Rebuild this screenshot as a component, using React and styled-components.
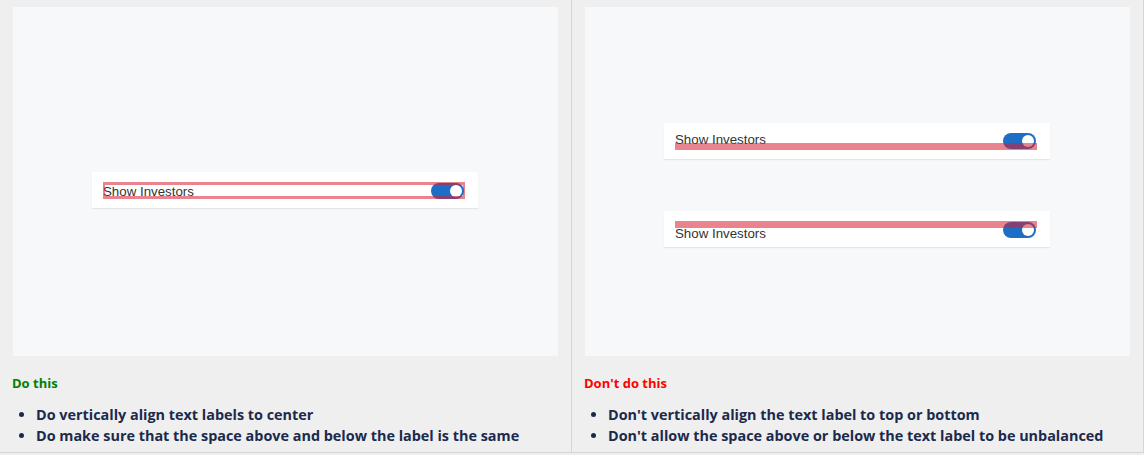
import React from "react";
import styled, { createGlobalStyle } from "styled-components";

const Global = createGlobalStyle`
  html, body { margin: 0; padding: 0; background: #efefef; }
  body { width: 1144px; height: 455px; overflow: hidden; }
`;

const Page = styled.div`
  display: grid;
  grid-template-columns: 571px 571px;
  column-gap: 1px;
  width: 1143px;
  height: 452px;
  background: #d6d6d6;
  border-right: 1px solid #d6d6d6;
  border-bottom: 1px solid #d6d6d6;
`;

const Column = styled.section`
  background: #efefef;
  padding: 7px 13px 0;
  display: flex;
  flex-direction: column;
`;

const Canvas = styled.div`
  height: 349px;
  background: #f7f8fa;
  display: flex;
  flex-direction: column;
  align-items: flex-start;
  padding: ${(p) => p.$top}px 0 0 79px;
  gap: 52px;
  box-sizing: border-box;
`;

const Card = styled.div`
  width: 386px;
  height: 36px;
  box-sizing: border-box;
  background: #ffffff;
  box-shadow: 0 1px 1px rgba(0, 0, 0, 0.07);
  padding: ${(p) => p.$pt}px 13px 0 11px;
`;

const Row = styled.div`
  position: relative;
  height: 17px;
  display: flex;
  justify-content: space-between;
  align-items: ${(p) => p.$align};
`;

const Label = styled.span`
  font-family: "Liberation Sans", Arial, sans-serif;
  font-size: 13.3px;
  line-height: 13px;
  color: #333333;
  margin-bottom: ${(p) => (p.$bottom ? "-2px" : "0")};
  margin-top: ${(p) => (p.$center ? "1px" : "0")};
`;

const Toggle = styled.span`
  width: 33px;
  height: 16px;
  margin-right: 1px;
  border-radius: 8px;
  background: #1e6ec6;
  box-sizing: border-box;
  display: flex;
  align-items: center;
  justify-content: flex-end;
  padding-right: 2px;
  &::after {
    content: "";
    width: 12px;
    height: 12px;
    border-radius: 50%;
    background: #ffffff;
  }
`;

const Outline = styled.span`
  position: absolute;
  left: 0;
  right: 0;
  top: 0;
  height: 17px;
  box-sizing: border-box;
  border: solid rgba(215, 30, 50, 0.55);
  border-width: 3px 2px;
  pointer-events: none;
`;

const Bar = styled.span`
  position: absolute;
  left: 0;
  right: 0;
  height: 7px;
  ${(p) => (p.$at === "top" ? "top: 0;" : "bottom: 0;")}
  background: rgba(215, 30, 50, 0.55);
  pointer-events: none;
`;

const Heading = styled.h3`
  margin: 18px 0 0 -1px;
  font-family: "Open Sans", "Noto Sans", sans-serif;
  font-weight: 700;
  font-size: 13px;
  line-height: 18px;
  color: ${(p) => p.$color};
`;

const List = styled.ul`
  margin: 12px 0 0;
  padding-left: 23px;
  font-family: "Open Sans", "Noto Sans", sans-serif;
  font-weight: 700;
  font-size: 14.4px;
  line-height: 21px;
  color: #1b2a4c;
`;

export default function App() {
  return (
    <>
      <Global />
      <Page>
        <Column>
          <Canvas $top={165}>
            <Card $pt={10}>
              <Row $align="center">
                <Label $center>Show Investors</Label>
                <Toggle />
                <Outline />
              </Row>
            </Card>
          </Canvas>
          <Heading $color="#008000">Do this</Heading>
          <List>
            <li>Do vertically align text labels to center</li>
            <li>Do make sure that the space above and below the label is the same</li>
          </List>
        </Column>
        <Column>
          <Canvas $top={116}>
            <Card $pt={10}>
              <Row $align="flex-start">
                <Label>Show Investors</Label>
                <Toggle />
                <Bar $at="bottom" />
              </Row>
            </Card>
            <Card $pt={10}>
              <Row $align="flex-end">
                <Label $bottom>Show Investors</Label>
                <Toggle />
                <Bar $at="top" />
              </Row>
            </Card>
          </Canvas>
          <Heading $color="#ff0000">Don't do this</Heading>
          <List>
            <li>Don't vertically align the text label to top or bottom</li>
            <li>Don't allow the space above or below the text label to be unbalanced</li>
          </List>
        </Column>
      </Page>
    </>
  );
}
